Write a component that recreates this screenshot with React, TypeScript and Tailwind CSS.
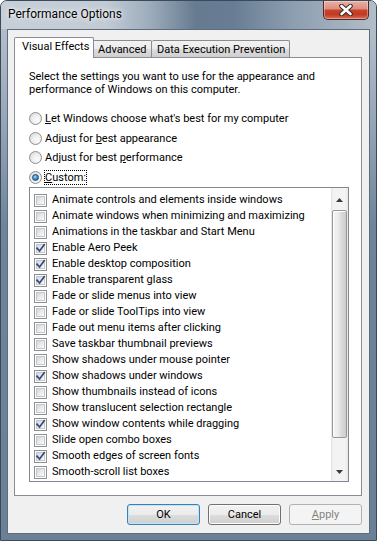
import React from "react";

const items: [string, boolean][] = [
  ["Animate controls and elements inside windows", false],
  ["Animate windows when minimizing and maximizing", false],
  ["Animations in the taskbar and Start Menu", false],
  ["Enable Aero Peek", true],
  ["Enable desktop composition", true],
  ["Enable transparent glass", true],
  ["Fade or slide menus into view", false],
  ["Fade or slide ToolTips into view", false],
  ["Fade out menu items after clicking", false],
  ["Save taskbar thumbnail previews", false],
  ["Show shadows under mouse pointer", false],
  ["Show shadows under windows", true],
  ["Show thumbnails instead of icons", false],
  ["Show translucent selection rectangle", false],
  ["Show window contents while dragging", true],
  ["Slide open combo boxes", false],
  ["Smooth edges of screen fonts", true],
  ["Smooth-scroll list boxes", false],
];

function CheckBox({ checked }: { checked: boolean }) {
  return (
    <span className="relative flex h-[13px] w-[13px] shrink-0 border border-[#8e8f8f] bg-white p-[1px]">
      <span className="flex-1 border border-[#c3c6cb] bg-[linear-gradient(135deg,#d2d5da_0%,#e9eaec_50%,#fafafa_100%)]" />
      {checked && (
        <svg className="absolute left-[-1px] top-[-1px]" width="13" height="13" viewBox="0 0 13 13">
          <path d="M3 6.2 L5.6 9 L10.2 2.8" fill="none" stroke="#33497a" strokeWidth="1.7" strokeLinecap="square" />
        </svg>
      )}
    </span>
  );
}

function Radio({ checked }: { checked?: boolean }) {
  return (
    <span className="relative flex h-[13px] w-[13px] shrink-0 rounded-full border border-[#8e8f8f] bg-[radial-gradient(circle_at_65%_65%,#fbfbfb_0%,#eeeeee_45%,#cfd1d4_100%)]">
      {checked && (
        <span className="absolute left-[2px] top-[2px] h-[7px] w-[7px] rounded-full border border-[#1c4a78] bg-[radial-gradient(circle_at_40%_35%,#b4e2fb_0%,#4a9bd8_40%,#14578f_100%)]" />
      )}
    </span>
  );
}

function ArrowUp() {
  return (
    <svg width="7" height="4" viewBox="0 0 7 4">
      <polygon points="3.5,0 7,4 0,4" fill="#3c3c3c" />
    </svg>
  );
}
function ArrowDown() {
  return (
    <svg width="7" height="4" viewBox="0 0 7 4">
      <polygon points="0,0 7,0 3.5,4" fill="#3c3c3c" />
    </svg>
  );
}

function Btn({ children, kind }: { children: React.ReactNode; kind: "default" | "normal" | "disabled" }) {
  const cls =
    kind === "default"
      ? "border-[#3c7fb1] bg-[linear-gradient(180deg,#f2f2f2_0%,#ebebeb_50%,#dddddd_51%,#cfcfcf_100%)] shadow-[inset_0_0_0_1px_#bfe6f8] text-black"
      : kind === "normal"
      ? "border-[#707070] bg-[linear-gradient(180deg,#f2f2f2_0%,#ebebeb_50%,#dddddd_51%,#cfcfcf_100%)] shadow-[inset_0_0_0_1px_#fcfcfc] text-black"
      : "border-[#adb2b5] bg-[#f4f4f4] text-[#838383]";
  return (
    <div className={`flex h-[21px] w-[73px] items-center justify-center rounded-[3px] border text-[11px] leading-[13px] ${cls}`}>
      {children}
    </div>
  );
}

export default function App() {
  return (
    <div className="flex h-[541px] w-[377px] flex-col overflow-hidden rounded-t-[7px] border border-[#3b4a5a] bg-[linear-gradient(180deg,#bcc5d0_0%,#97a6b7_22%,#6f849a_42%,#6b8097_100%)] font-[Roboto,sans-serif] text-black">
      {/* title bar */}
      <div className="flex h-[28px] shrink-0 bg-[linear-gradient(90deg,#c7cfd8_0%,#c2cbd5_28%,#9cabbb_40%,#667a90_52%,#687d94_62%,#8d9eb0_78%,#b2bec9_100%)]">
        <div className="pl-[7px] pt-[6px] text-[12px] leading-[14px] text-black [text-shadow:0_0_6px_rgba(255,255,255,0.95),0_0_3px_rgba(255,255,255,0.8)]">
          Performance Options
        </div>
        <div className="ml-auto mr-[7px] flex h-[19px] w-[46px] items-center justify-center rounded-b-[5px] border border-t-0 border-[#4e2a26] bg-[linear-gradient(180deg,#eab0a3_0%,#dd907f_42%,#c8442c_52%,#c23a22_75%,#d9705a_100%)] shadow-[inset_0_0_0_1px_rgba(255,255,255,0.35)]">
          <svg width="14" height="12" viewBox="0 0 14 12">
            <path d="M2.5 2 L11.5 10 M11.5 2 L2.5 10" stroke="#3e2a2a" strokeWidth="4.6" strokeLinecap="round" />
            <path d="M2.5 2 L11.5 10 M11.5 2 L2.5 10" stroke="#ffffff" strokeWidth="2.6" strokeLinecap="round" />
          </svg>
        </div>
      </div>

      {/* client */}
      <div className="mx-[6px] flex h-[505px] shrink-0 flex-col border border-[#5e6d7e] bg-[#f0f0f0]">
        {/* tabs */}
        <div className="relative z-10 flex h-[28px] items-end pl-[6px] pt-[7px] text-[11px] leading-[13px]">
          <div className="h-[21px] w-[80px] rounded-t-[2px] border border-b-0 border-[#898c95] bg-white pl-[7px] pt-[2px]">
            Visual Effects
          </div>
          <div className="mb-[1px] h-[17px] w-[58px] rounded-tr-[2px] border border-b-0 border-l-0 border-[#898c95] bg-[linear-gradient(180deg,#f2f2f2_0%,#ebebeb_50%,#dddddd_51%,#cfcfcf_100%)] pl-[4px] pt-[2px]">
            Advanced
          </div>
          <div className="mb-[1px] h-[17px] w-[138px] rounded-t-[2px] border border-b-0 border-l-0 border-[#898c95] bg-[linear-gradient(180deg,#f2f2f2_0%,#ebebeb_50%,#dddddd_51%,#cfcfcf_100%)] pl-[5px] pt-[2px] whitespace-nowrap">
            Data Execution Prevention
          </div>
        </div>

        {/* panel */}
        <div className="relative z-0 -mt-[1px] ml-[6px] h-[439px] w-[348px] border border-[#898c95] bg-white pl-[14px] pr-[12px] pt-[12px] text-[11px]">
          <p className="whitespace-nowrap leading-[13px]">
            Select the settings you want to use for the appearance and
            <br />
            performance of Windows on this computer.
          </p>
          <div className="mt-[13px] flex flex-col">
            <div className="flex h-[19.5px] items-center gap-[3px] leading-[13px]">
              <Radio />
              <span>
                <u>L</u>et Windows choose what's best for my computer
              </span>
            </div>
            <div className="flex h-[19.5px] items-center gap-[3px] leading-[13px]">
              <Radio />
              <span>
                Adjust for <u>b</u>est appearance
              </span>
            </div>
            <div className="flex h-[19.5px] items-center gap-[3px] leading-[13px]">
              <Radio />
              <span>
                Adjust for best <u>p</u>erformance
              </span>
            </div>
            <div className="flex h-[19.5px] items-center gap-[3px] leading-[13px]">
              <Radio checked />
              <span className="outline outline-1 outline-dotted outline-black">
                <u>C</u>ustom:
              </span>
            </div>
          </div>

          {/* list box */}
          <div className="flex h-[295px] w-[320px] border border-[#828790] bg-white">
            <div className="flex-1 overflow-hidden pt-[4px]">
              {items.map(([label, checked]) => (
                <div key={label} className="flex h-[16px] items-center gap-[5px] whitespace-nowrap pl-[4px] leading-[16px]">
                  <CheckBox checked={checked} />
                  <span>{label}</span>
                </div>
              ))}
            </div>
            <div className="flex w-[17px] flex-col bg-[linear-gradient(90deg,#e3e3e3_0%,#f3f3f3_15%,#f3f3f3_85%,#e6e6e6_100%)]">
              <div className="flex h-[21px] justify-center pt-[10px]">
                <ArrowUp />
              </div>
              <div className="mx-[1px] mt-[1px] h-[228px] rounded-[2px] border border-[#979797] bg-[linear-gradient(90deg,#f4f4f4_0%,#ececec_40%,#dcdcdc_60%,#cdcdcd_100%)] shadow-[inset_1px_1px_0_#ffffff]" />
              <div className="flex-1" />
              <div className="flex h-[17px] justify-center pt-[6px]">
                <ArrowDown />
              </div>
            </div>
          </div>
        </div>

        {/* buttons */}
        <div className="mt-[8px] flex justify-end gap-[8px] pr-[7px]">
          <Btn kind="default">OK</Btn>
          <Btn kind="normal">Cancel</Btn>
          <Btn kind="disabled">
            <span>
              <u>A</u>pply
            </span>
          </Btn>
        </div>
      </div>
    </div>
  );
}
